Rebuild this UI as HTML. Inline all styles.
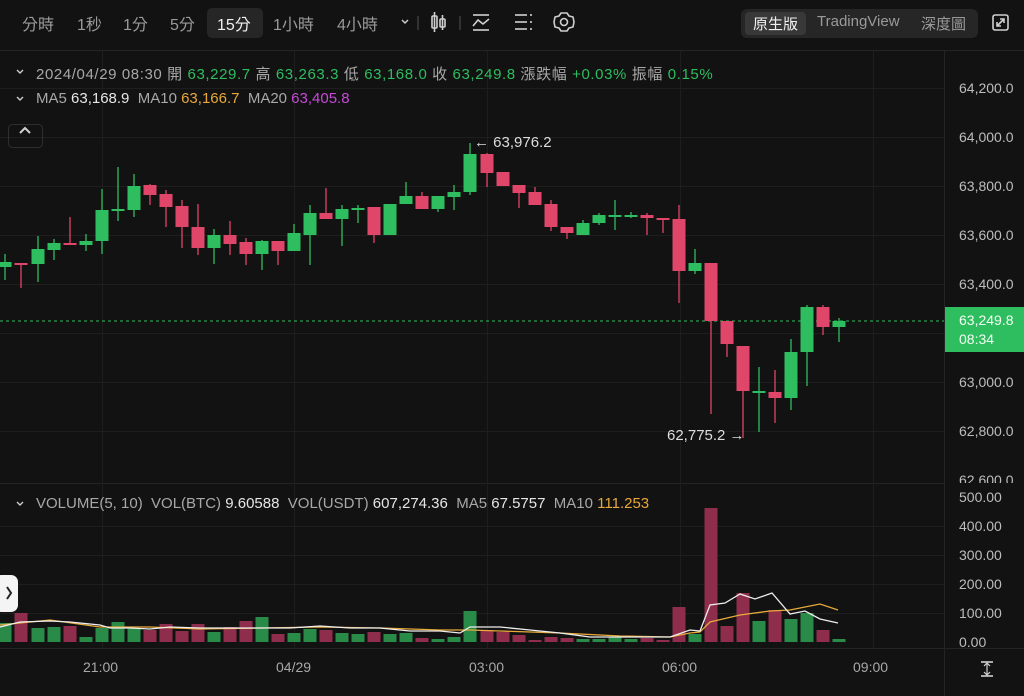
<!DOCTYPE html>
<html><head><meta charset="utf-8"><style>
*{margin:0;padding:0;box-sizing:border-box}
body{width:1024px;height:696px;background:#121212;overflow:hidden;position:relative;font-family:"Liberation Sans","Noto Sans CJK TC",sans-serif;color:#a8a8a8;font-size:14px}
.a{position:absolute;white-space:nowrap}
.g{color:#2ebd5f}.o{color:#e8a93a}.p{color:#c64ad6}.w{color:#e6e6e6}
</style></head><body>
<svg class="a" style="left:0;top:0" width="1024" height="696" id="s">
<g stroke="#242424" stroke-width="1">
<line x1="0" y1="50.5" x2="1024" y2="50.5"/>
<line x1="944.5" y1="50" x2="944.5" y2="696"/>
<line x1="0" y1="483.5" x2="944" y2="483.5"/>
<line x1="0" y1="648.5" x2="1024" y2="648.5"/>
</g>
<g stroke="#1e1e1e" id="grid"></g>
<line x1="0" y1="321" x2="944" y2="321" stroke="#2ebd5f" stroke-dasharray="3,3" stroke-width="1"/>
<g id="c"></g>
<g id="v"></g>
<polyline fill="none" stroke="#e8a93a" stroke-width="1.3" points="0,625 50,620 100,627 150,627 200,629 260,628 320,627 380,628 440,630 470,630 500,631 560,633 620,636 670,637 690,633 700,632 710,622 740,615 770,611 790,610 820,604 838,610"/>
<polyline fill="none" stroke="#eeeeee" stroke-width="1.3" points="0,627 20,622 50,621 70,622 100,625 110,628 130,628 150,629 170,627 200,628 230,628 260,628 290,628 320,626 350,628 380,628 410,631 440,631 460,633 470,627 500,627 530,630 560,633 590,637 620,637 650,637 670,637 690,630 700,631 710,605 725,603 740,594 755,599 772,593 790,614 805,611 820,619 838,623"/>
<g stroke="#d0d0d0" stroke-width="1.6" fill="none">
<line x1="418" y1="16" x2="418" y2="30" stroke="#3a3a3a"/>
<rect x="432" y="16" width="5" height="12" rx="1"/><line x1="434.5" y1="12" x2="434.5" y2="32"/>
<rect x="440" y="19" width="5" height="8" rx="1"/><line x1="442.5" y1="15" x2="442.5" y2="30"/>
<line x1="460" y1="16" x2="460" y2="30" stroke="#3a3a3a"/>
<line x1="473" y1="15" x2="489" y2="15"/><line x1="473" y1="30" x2="489" y2="30"/>
<polyline points="473,26 478,20 483,24 489,19"/>
<line x1="515" y1="15" x2="527" y2="15"/><line x1="515" y1="22" x2="527" y2="22"/><line x1="515" y1="29" x2="527" y2="29"/>
<line x1="530" y1="15" x2="532" y2="15"/><line x1="530" y1="22" x2="532" y2="22"/><line x1="530" y1="29" x2="532" y2="29"/>
<path d="M561,13 L567,13 L569,16 L573,17 L574,22 L573,27 L569,28 L567,31 L561,31 L559,28 L555,27 L554,22 L555,17 L559,16 Z" stroke-linejoin="round"/>
<circle cx="564" cy="22" r="3.5"/>
<rect x="993" y="15" width="15" height="15" rx="2"/>
<path d="M997,26 L1004,19 M1000,19 L1004,19 L1004,23 M997,22 L997,26 L1001,26"/>
<line x1="981" y1="662" x2="993" y2="662"/><line x1="981" y1="676" x2="993" y2="676"/>
<path d="M987,663 L987,675 M984,666 L987,663 L990,666 M984,672 L987,675 L990,672" stroke-width="1.2"/>
<path d="M20,133 L25,128 L30,133" stroke-width="2"/>
</g>
<path d="M402,20 L405,23 L408,20" stroke="#ccc" stroke-width="1.5" fill="none"/>
<path d="M17,70 L20,73 L23,70" stroke="#ccc" stroke-width="1.4" fill="none"/>
<path d="M17,97 L20,100 L23,97" stroke="#ccc" stroke-width="1.4" fill="none"/>
<path d="M17,502 L20,505 L23,502" stroke="#ccc" stroke-width="1.4" fill="none"/>
<rect x="8.5" y="124.5" width="34" height="23" rx="4" fill="none" stroke="#2e2e2e"/>
<rect x="-6" y="575" width="24" height="37" rx="7" fill="#f4f4f4"/>
<path d="M7,587 L11,593 L7,599" stroke="#222" stroke-width="2" fill="none"/>
<text x="474" y="147" fill="#ddd" font-size="15" font-family="Liberation Sans">← 63,976.2</text>
<text x="667" y="440" fill="#ddd" font-size="15" font-family="Liberation Sans">62,775.2 →</text>
</svg>
<div class="a" style="left:22px;top:11px;font-size:16px;color:#9a9a9a">分時</div>
<div class="a" style="left:77px;top:11px;font-size:16px;color:#9a9a9a">1秒</div>
<div class="a" style="left:123px;top:11px;font-size:16px;color:#9a9a9a">1分</div>
<div class="a" style="left:170px;top:11px;font-size:16px;color:#9a9a9a">5分</div>
<div class="a" style="left:207px;top:8px;width:56px;height:30px;background:#262626;border-radius:5px"></div>
<div class="a" style="left:217px;top:11px;font-size:16px;color:#f0f0f0">15分</div>
<div class="a" style="left:273px;top:11px;font-size:16px;color:#9a9a9a">1小時</div>
<div class="a" style="left:337px;top:11px;font-size:16px;color:#9a9a9a">4小時</div>
<div class="a" style="left:741px;top:9px;width:237px;height:29px;background:#262626;border-radius:6px"></div>
<div class="a" style="left:745px;top:12px;width:61px;height:23px;background:#383838;border-radius:4px"></div>
<div class="a" style="left:753px;top:13px;font-size:15px;color:#f0f0f0">原生版</div>
<div class="a" style="left:817px;top:13px;font-size:15px;color:#9a9a9a">TradingView</div>
<div class="a" style="left:921px;top:13px;font-size:15px;color:#9a9a9a">深度圖</div>
<div class="a" style="left:36px;top:63px;font-size:15px;letter-spacing:0.6px">2024/04/29 08:30 開 <span class="g">63,229.7</span> 高 <span class="g">63,263.3</span> 低 <span class="g">63,168.0</span> 收 <span class="g">63,249.8</span> 漲跌幅 <span class="g">+0.03%</span> 振幅 <span class="g">0.15%</span></div>
<div class="a" style="left:36px;top:90px;font-size:15px">MA5 <span class="w">63,168.9</span> &nbsp;MA10 <span class="o">63,166.7</span> &nbsp;MA20 <span class="p">63,405.8</span></div>
<div class="a" style="left:36px;top:495px;font-size:15px">VOLUME(5, 10) &nbsp;VOL(BTC) <span class="w">9.60588</span> &nbsp;VOL(USDT) <span class="w">607,274.36</span> &nbsp;MA5 <span class="w">67.5757</span> &nbsp;MA10 <span class="o">111.253</span></div>
<div id="ax"></div>
<div class="a" style="left:945px;top:307px;width:79px;height:45px;background:#2ebd5f"></div>
<div class="a" style="left:959px;top:312px;color:#f2fff5">63,249.8</div>
<div class="a" style="left:959px;top:331px;color:#f2fff5">08:34</div>
<div class="a" style="left:83px;top:659px">21:00</div>
<div class="a" style="left:276px;top:659px">04/29</div>
<div class="a" style="left:469px;top:659px">03:00</div>
<div class="a" style="left:662px;top:659px">06:00</div>
<div class="a" style="left:853px;top:659px">09:00</div>
<script>
var NS="http://www.w3.org/2000/svg";
function el(p,t,a){var e=document.createElementNS(NS,t);for(var k in a)e.setAttribute(k,a[k]);p.appendChild(e);return e;}
var gr=document.getElementById('grid');
[102,294,487,680,873].forEach(function(x){el(gr,'line',{x1:x+.5,y1:51,x2:x+.5,y2:648});});
[88,137,186,235,284,333,382,431,526,555,584,613].forEach(function(y){el(gr,'line',{x1:0,y1:y+.5,x2:944,y2:y+.5});});
var C=[[5,'G',262,267,254,280],[21,'R',263,264,263,288],[38,'G',249,264,236,282],[54,'G',243,250,239,260],[70,'R',243,245,217,245],[86,'G',241,245,234,251],[102,'G',210,241,189,254],[118,'G',209,211,167,221],[134,'G',186,210,174,217],[150,'R',185,195,184,205],[166,'R',194,207,190,227],[182,'R',206,227,200,248],[198,'R',227,248,204,255],[214,'G',235,248,229,264],[230,'R',235,244,221,255],[246,'R',242,254,238,265],[262,'G',241,254,240,270],[278,'R',241,251,241,265],[294,'G',233,251,224,251],[310,'G',213,235,205,265],[326,'R',213,219,188,219],[342,'G',209,219,205,246],[358,'G',208,210,205,223],[374,'R',207,235,207,243],[390,'G',204,235,204,235],[406,'G',196,204,182,204],[422,'R',196,209,192,209],[438,'G',196,209,196,212],[454,'G',192,197,185,210],[470,'G',154,192,143,195],[487,'R',154,173,153,187],[503,'R',172,186,172,186],[519,'R',185,193,185,208],[535,'R',192,205,187,205],[551,'R',204,227,200,231],[567,'R',227,233,227,239],[583,'G',223,235,220,235],[599,'G',215,223,213,225],[615,'G',215,217,200,230],[631,'G',215,217,212,218],[647,'R',215,218,213,235],[663,'R',218,219,218,233],[679,'R',219,271,205,303],[695,'G',263,271,249,274],[711,'R',263,321,263,414],[727,'R',321,344,321,357],[743,'R',346,391,346,438],[759,'G',391,393,367,432],[775,'R',392,398,370,423],[791,'G',352,398,339,410],[807,'G',307,352,305,386],[823,'R',307,327,305,335],[839,'G',321,327,318,342]];
var V=[623,613,628,627,626,637,628,622,628,630,624,631,624,632,627,621,617,634,633,629,630,633,634,632,634,633,638,639,637,611,631,632,635,640,637,638,639,639,637,639,638,640,607,634,508,626,593,621,610,619,613,630,639];
var cg=document.getElementById('c'),vg=document.getElementById('v');
C.forEach(function(c,i){var col=c[1]=='G'?'#2ebd5f':'#e0456a';
el(cg,'line',{x1:c[0],y1:c[4],x2:c[0],y2:c[5],stroke:col,'stroke-width':1.3});
el(cg,'rect',{x:c[0]-6.5,y:c[2],width:13,height:Math.max(2,c[3]-c[2]),fill:col});
el(vg,'rect',{x:c[0]-6.5,y:V[i],width:13,height:642-V[i],fill:c[1]=='G'?'#2a8a48':'#8f2e4c'});});
var ax=document.getElementById('ax'),L=[['64,200.0',80],['64,000.0',129],['63,800.0',178],['63,600.0',227],['63,400.0',276],['63,000.0',374],['62,800.0',423],['62,600.0',472],['500.00',489],['400.00',518],['300.00',547],['200.00',576],['100.00',605],['0.00',634]];
L.forEach(function(l){var d=document.createElement('div');d.className='a';d.style.left='959px';d.style.top=l[1]+'px';d.style.color='#bdbdbd';d.textContent=l[0];ax.appendChild(d);});
</script>
<div class="a" style="left:945px;top:483px;width:79px;height:4px;background:#121212"></div>
</body></html>
